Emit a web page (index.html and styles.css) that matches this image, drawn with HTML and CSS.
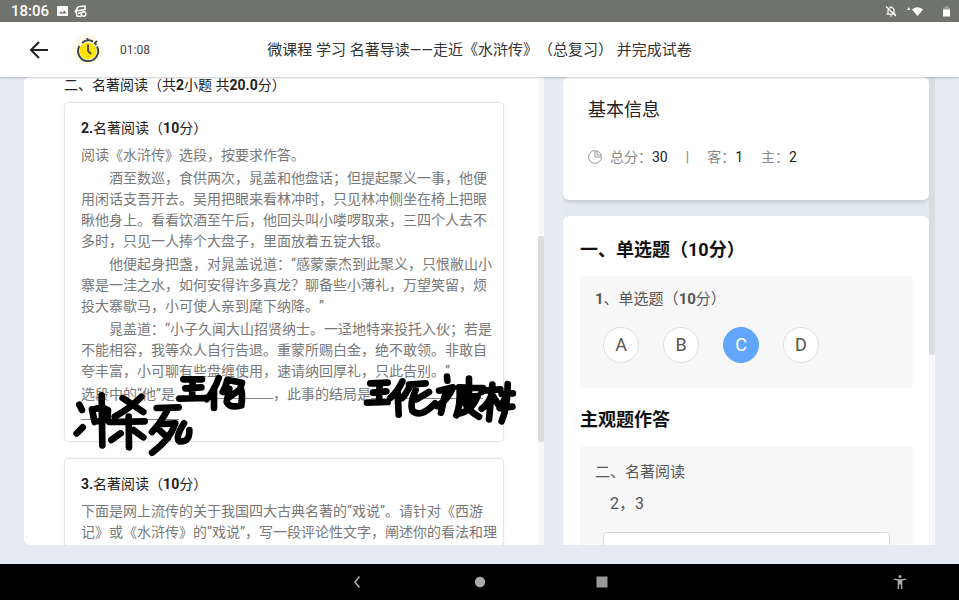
FILE: index.html
```html
<!DOCTYPE html>
<html lang="zh-CN">
<head>
<meta charset="utf-8">
<meta name="viewport" content="width=device-width, initial-scale=1">
<title>名著导读</title>
<link rel="stylesheet" href="styles.css">
</head>
<body>
<div class="status">
  <span class="clock">18:06</span>
  <svg width="11" height="10" viewBox="0 0 11 10"><rect width="11" height="10" rx="1" fill="#fff"/><path d="M2 7.500l2-2.200 1.500 1.500L7.500 4.500 9.500 7.500z" fill="#70726e"/></svg>
  <svg class="cast" width="13" height="13" viewBox="0 0 13 13" fill="none" stroke="#fff" stroke-width="1.500"><path d="M4 1.800L11 1v3.500L1.500 6 4 1.800M2 6.500L3 11l4 .5M4 8.500l3-1"/><circle cx="9.500" cy="9" r="2.300"/></svg>
  <span class="spacer"></span>
  <svg width="12" height="12" viewBox="0 0 12 12" fill="none" stroke="#fff" stroke-width="1.200"><path d="M3 9V5.500a3 3 0 0 1 6 0V9M1.500 9.200h9M6 1v1.500M5 11h2M1 1.500l10 9.500"/></svg>
  <svg class="wifi" width="16" height="12" viewBox="0 0 16 12" fill="#fff"><path d="M0 5l1.700-3L3.400 5zM5 4.500Q10.500 0 16 4.500L10.500 11z"/></svg>
  <svg class="battery" width="7" height="11" viewBox="0 0 7 11"><path d="M2 0h3v1.500h2V4H0V1.500h2z" fill="#9a9b98"/><rect y="3.500" width="7" height="7" fill="#fff"/></svg>
</div>
<header class="header">
  <div class="header-side">
    <button class="back" type="button" aria-label="返回"><svg width="20" height="18" viewBox="0 0 20 18" fill="none" stroke="#222" stroke-width="2"><path d="M19 9H2M10 1L2 9l8 8"/></svg></button>
    <svg class="timer-icon" width="32" height="32" viewBox="0 0 32 32" fill="none"><circle cx="16" cy="16" r="15" fill="#fffbe3"/><circle cx="17" cy="17" r="8.500" fill="#ffe100"/><path d="M8.500 12A10 10 0 1 0 26 12.500M11 9a10 10 0 0 1 11-1.500" stroke="#3b4a50" stroke-width="2"/><path d="M16.500 4v3M23 8.500l2.500 2.500M26 7l-2.500 2.500M17 10.500V17l3 3" stroke="#3b4a50" stroke-width="1.800"/></svg>
    <span class="elapsed">01:08</span>
  </div>
  <h1 class="title">微课程 学习 名著导读——走近《水浒传》（总复习） 并完成试卷</h1>
  <div class="header-side"></div>
</header>
<main class="main">
  <section class="paper">
    <div class="paper-body">
      <h2 class="part-title">二、名著阅读（共<b>2</b>小题 共<b>20.0</b>分）</h2>
      <article class="question">
        <h3 class="question-title"><b>2.</b>名著阅读（<b>10</b>分）</h3>
        <div class="passage">
          <p>阅读《水浒传》选段，按要求作答。</p>
          <p class="indent">酒至数巡，食供两次，晁盖和他盘话；但提起聚义一事，他便<br>用闲话支吾开去。吴用把眼来看林冲时，只见林冲侧坐在椅上把眼<br>瞅他身上。看看饮酒至午后，他回头叫小喽啰取来，三四个人去不<br>多时，只见一人捧个大盘子，里面放着五锭大银。</p>
          <p class="indent">他便起身把盏，对晁盖说道：“感蒙豪杰到此聚义，只恨敝山小<br>寨是一洼之水，如何安得许多真龙？聊备些小薄礼，万望笑留，烦<br>投大寨歇马，小可使人亲到麾下纳降。”</p>
          <p class="indent">晁盖道：“小子久闻大山招贤纳士。一迳地特来投托入伙；若是<br>不能相容，我等众人自行告退。重蒙所赐白金，绝不敢领。非敢自<br>夸丰富，小可聊有些盘缠使用，速请纳回厚礼，只此告别。”</p>
          <p>选段中的“他”是<span class="blank"></span>，此事的结局是<span class="blank blank-long"></span><br><span class="blank"></span></p>
        </div>
        <svg class="ink" width="456" height="110" viewBox="0 0 1368 330" fill="none" stroke="#000" stroke-width="20" stroke-linecap="round" stroke-linejoin="round">
          <g transform="translate(24 30)"><path d="M346 28L402 28M352 55L400 52M374 30L372 85M334 86L412 84M452 24Q440 60 416 88M438 55L438 114M478 30Q474 50 464 66M480 30L522 38L518 52M484 56L476 96Q486 116 520 106M520 60Q524 80 520 106M516 58L486 80"/><path d="M34 104L42 120M26 190L44 172M72 118L80 156M72 120Q100 108 120 120L118 150L80 154M101 76L103 226M164 84L226 126M220 80Q190 112 140 140M124 156L230 154M182 140L183 232M130 210L158 190M196 180L226 202M266 114L332 112M298 120Q280 156 252 186M284 162L322 160Q306 210 252 248M276 182L300 204M348 160Q320 204 334 214Q366 218 364 180"/></g>
          <g transform="translate(885 30)"><path d="M46 40L98 38M54 68L94 64M74 40L72 96M36 98L98 96M142 34Q130 62 106 84M128 66L131 134M166 46Q150 76 142 84M162 44L212 40M182 60Q164 100 172 122Q196 146 240 100M222 66L184 88"/><path d="M276 20L277 32M252 62L294 52Q278 90 246 108M272 66L258 128M314 52Q316 110 304 136M312 52L384 54L380 66M342 26L342 90M318 82L368 78Q350 122 316 130M324 88Q340 124 372 140M330 66L350 106"/><path d="M386 62L436 58M412 44L402 148M410 74Q398 104 380 116M414 78L430 104M440 72L474 70M458 42Q458 110 440 154M450 86L434 114M454 112L472 110"/></g>
        </svg>
      </article>
      <article class="question">
        <h3 class="question-title"><b>3.</b>名著阅读（<b>10</b>分）</h3>
        <div class="passage">
          <p>下面是网上流传的关于我国四大古典名著的“戏说”。请针对《西游<br>记》或《水浒传》的“戏说”，写一段评论性文字，阐述你的看法和理</p>
        </div>
      </article>
    </div>
    <div class="track"><div class="thumb"></div></div>
  </section>
  <aside class="sheet">
    <div class="sheet-body">
      <section class="card info">
        <h2 class="info-title">基本信息</h2>
        <div class="stats">
          <svg width="14" height="14" viewBox="0 0 14 14" fill="none" stroke="#999"><circle cx="7" cy="7" r="6.400"/><path d="M7 1v6h6M9 1v4h4"/></svg>
          <span>总分：<em>30</em></span><span class="bar">|</span><span>客：<em>1</em></span><span>主：<em>2</em></span>
        </div>
      </section>
      <section class="card answers">
        <h2 class="answers-title">一、单选题（10分）</h2>
        <fieldset class="box">
          <legend class="box-title"><b>1</b>、单选题（<b>10</b>分）</legend>
          <div class="options">
            <label class="option"><input type="radio" name="q1">A</label>
            <label class="option"><input type="radio" name="q1">B</label>
            <label class="option"><input type="radio" name="q1" checked>C</label>
            <label class="option"><input type="radio" name="q1">D</label>
          </div>
        </fieldset>
        <h2 class="answers-title">主观题作答</h2>
        <div class="box essay">
          <h3 class="box-title">二、名著阅读</h3>
          <label class="numbers" for="essay">2，3</label>
          <textarea class="field" id="essay"></textarea>
        </div>
      </section>
    </div>
    <div class="track"><div class="thumb"></div></div>
  </aside>
</main>
<nav class="navbar">
  <span></span>
  <div class="nav-keys">
    <button type="button" aria-label="后退"><svg width="12" height="12" viewBox="0 0 12 12" fill="none" stroke="#aaa" stroke-width="1.600"><path d="M7.500 .500L3 6l4.500 5.500"/></svg></button>
    <button type="button" aria-label="主页"><svg width="12" height="12" viewBox="0 0 12 12"><circle cx="6" cy="6" r="5.200" fill="#aaa"/></svg></button>
    <button type="button" aria-label="最近"><svg width="12" height="12" viewBox="0 0 12 12"><rect x=".500" y=".500" width="11" height="11" fill="#999"/></svg></button>
  </div>
  <button class="access" type="button" aria-label="无障碍"><svg width="12" height="14" viewBox="0 0 12 14" fill="#aaa"><circle cx="6" cy="1.500" r="1.500"/><path d="M0 3.500q6 1.400 12 0v1.300L8.300 5.500V14H6.900V9.500H5.100V14H3.700V5.500L0 4.800z"/></svg></button>
</nav>
</body>
</html>
```

FILE: styles.css
```css
* { box-sizing: border-box; }
body {
  margin: 0;
  height: 100vh;
  display: flex;
  flex-direction: column;
  overflow: hidden;
  background: #e5eaf5;
  color: #222;
  font-family: Roboto, "Noto Sans CJK SC", sans-serif;
  font-size: 14px;
  text-spacing-trim: space-all;
}
h1, h2, h3, p { margin: 0; font-weight: 400; }
button { border: 0; padding: 0; background: none; display: flex; }
svg { display: block; flex: none; }

.status {
  flex: none;
  height: 22px;
  padding: 0 9px 0 11px;
  display: flex;
  align-items: center;
  gap: 8px;
  background: #70726e;
  color: #fff;
}
.clock { font-size: 15px; line-height: 22px; font-weight: 500; }
.cast { margin-left: -2px; }
.spacer { flex: 1; }
.wifi { margin: 0 12px 0 2px; }

.header {
  flex: none;
  position: relative;
  z-index: 1;
  height: 55px;
  padding: 0 29px;
  display: flex;
  align-items: center;
  background: #fff;
  box-shadow: 0 1px 2px rgba(0, 0, 0, .2);
}
.header-side { flex: 1; display: flex; align-items: center; }
.timer-icon { margin: 0 17px 0 22px; }
.elapsed { font-size: 12px; color: #444; }
.title { font-size: 15px; line-height: 24px; white-space: nowrap; color: #333; }

.main {
  flex: 1;
  min-height: 0;
  padding: 0 24px 19px;
  display: grid;
  grid-template-columns: 520fr 372fr;
  gap: 19px;
}
.paper, .sheet { display: flex; min-width: 0; min-height: 0; overflow: hidden; }
.paper { background: #fff; border-radius: 6px 0 0 6px; }
.paper-body { flex: 1; min-width: 0; padding: 0 34px 0 40px; }
.track { flex: none; width: 6px; background: #f8f8f8; }
.thumb { height: 44%; margin-top: 159px; border-radius: 2px; background: #dcdcdc; }

.part-title { font-size: 14px; line-height: 17px; white-space: nowrap; }
.question {
  position: relative;
  margin-top: 8px;
  padding: 15px 16px;
  border: 1px solid #e4e4e4;
  border-radius: 4px;
  box-shadow: 0 0 2px rgba(0, 0, 0, .08);
}
.question + .question { margin-top: 16px; }
.question-title { font-size: 14px; line-height: 20px; margin-bottom: 7px; }
.question-title b, .part-title b { font-weight: 700; }
.passage {
  display: flex;
  flex-direction: column;
  gap: 2px;
  line-height: 21px;
  color: #787878;
  white-space: nowrap;
}
.indent { text-indent: 2em; }
.blank {
  display: inline-block;
  width: 98px;
  height: 15px;
  margin-bottom: 6px;
  border-bottom: 1px solid #888;
  vertical-align: bottom;
}
.blank-long { width: 112px; }
.ink { position: absolute; left: -5px; top: 257px; pointer-events: none; }

.sheet-body { flex: 1; min-width: 0; background: #e1e9f2; }
.sheet .thumb { height: 278px; margin-top: 0; background: #d9dddd; }
.card { background: #fff; border-radius: 6px; }
.info { padding: 20px 25px 32px; box-shadow: 0 2px 4px rgba(0, 0, 0, .14); }
.info-title { font-size: 18px; line-height: 26px; }
.stats {
  display: flex;
  align-items: center;
  gap: 18px;
  margin-top: 23px;
  line-height: 22px;
  color: #888;
}
.stats svg { margin-right: -10px; }
.stats em { font-style: normal; color: #222; }

.answers { margin-top: 16px; padding: 22px 16px 0 17px; }
.answers-title { font-size: 18px; line-height: 24px; font-weight: 700; color: #111; }
.box { margin: 14px 0 20px; border: 0; padding: 13px 15px 25px; background: #f7f7f7; border-radius: 4px; }
.box-title { float: left; width: 100%; padding: 0; font-size: 15px; line-height: 20px; color: #555; }
.options { clear: both; display: flex; gap: 24px; padding: 18px 0 0 8px; }
.option {
  position: relative;
  width: 36px;
  height: 36px;
  border: 1px solid #dedede;
  border-radius: 50%;
  background: #fff;
  color: #555;
  font-size: 18px;
  line-height: 34px;
  text-align: center;
}
.option input { position: absolute; inset: 0; margin: 0; opacity: 0; }
.option:has(:checked) { background: #61a6fa; border-color: #61a6fa; color: #fff; }
.essay { padding: 16px 23px 25px 15px; }
.numbers { display: block; clear: both; padding: 12px 0 0 15px; font-size: 16px; line-height: 20px; color: #555; }
.field {
  display: block;
  width: calc(100% - 8px);
  height: 80px;
  margin: 18px 0 0 8px;
  border: 1px solid #d8d8d8;
  border-radius: 4px;
  background: #fff;
  resize: none;
}

.navbar {
  flex: none;
  height: 36px;
  padding: 0 53px;
  display: grid;
  grid-template-columns: 1fr auto 1fr;
  align-items: center;
  background: #000;
}
.nav-keys { display: flex; gap: 110px; }
.access { justify-self: end; }
```
